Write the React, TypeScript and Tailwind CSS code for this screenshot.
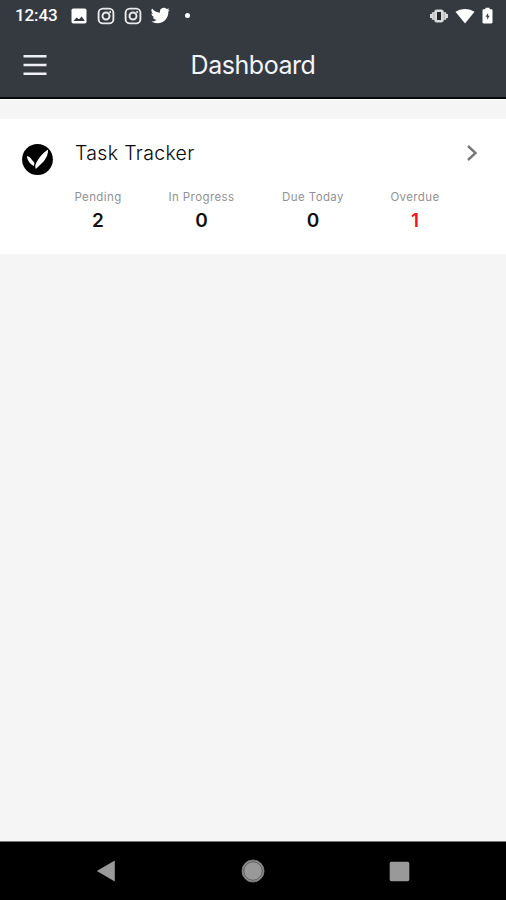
import type { ReactNode } from 'react';

function InstagramIcon() {
  return (
    <svg width="18" height="18" viewBox="0 0 18 18" fill="none" stroke="#e9eaeb">
      <rect x="1.6" y="1.6" width="14.8" height="14.8" rx="4.2" strokeWidth="1.9" />
      <circle cx="9" cy="9" r="3.5" strokeWidth="2" />
      <circle cx="13.1" cy="4.9" r="1" fill="white" stroke="none" />
    </svg>
  );
}

function StatusBar() {
  return (
    <div className="flex h-[31px] items-center pl-[15px] pr-[13px] text-white">
      <span className="w-[56px] text-[17px] font-medium leading-none tracking-[-0.1px] font-['Roboto',sans-serif]">12:43</span>
      <svg width="16" height="16" viewBox="0 0 16 16">
        <rect x="0.5" y="0.5" width="15" height="15" rx="1.8" fill="white" />
        <path d="M2.5 12.9 5.5 9.5 8 11.3 10.7 8.6 13.8 12.9Z" fill="#343941" />
      </svg>
      <div className="ml-[10px] flex gap-[9px]">
        <InstagramIcon />
        <InstagramIcon />
      </div>
      <svg className="ml-[9px]" width="19" height="19" viewBox="0 0 24 24" fill="white">
        <path d="M23.6 4.6a9.9 9.9 0 0 1-2.8.8 4.9 4.9 0 0 0 2.1-2.7 9.8 9.8 0 0 1-3.1 1.2 4.9 4.9 0 0 0-8.4 4.5A13.9 13.9 0 0 1 1.3 3.3a4.9 4.9 0 0 0 1.5 6.5 4.9 4.9 0 0 1-2.2-.6v.1a4.9 4.9 0 0 0 3.9 4.8 4.9 4.9 0 0 1-2.2.1 4.9 4.9 0 0 0 4.6 3.4A9.9 9.9 0 0 1 .4 19.6a13.9 13.9 0 0 0 7.5 2.2c9.1 0 14-7.5 14-14v-.6a10 10 0 0 0 1.7-2.6Z" />
      </svg>
      <span className="ml-[15px] size-[5px] rounded-full bg-white" />
      <svg className="ml-auto" width="20" height="16" viewBox="0 0 20 16">
        <path d="M1 6h1.8V4.2h2.4C5.2 2.4 6.2 1.6 7.8 1.6h4.4c1.6 0 2.6.8 2.6 2.6h2.4V6H19v4h-1.8v1.8h-2.4c0 1.8-1 2.6-2.6 2.6H7.8c-1.6 0-2.6-.8-2.6-2.6H2.8V10H1Z" fill="#d8d9da" />
        <rect x="8" y="4" width="4" height="8" fill="#24282e" />
        <path d="M4.9 5.2v5.6M15.1 5.2v5.6" stroke="#8b8e92" strokeWidth=".6" />
      </svg>
      <svg className="ml-[6px]" width="20" height="16" viewBox="0 0 20 16">
        <path d="M0.5 3.8C5.6-.1 14.4-.1 19.5 3.8L10 15.6Z" fill="white" />
      </svg>
      <svg className="ml-[7px]" width="11" height="17" viewBox="0 0 11 17">
        <path d="M3.4 0.8h4.2v1.5h1.7c.8 0 1.2.5 1.2 1.2v11.8c0 .7-.4 1.2-1.2 1.2H1.7c-.8 0-1.2-.5-1.2-1.2V3.5c0-.7.4-1.2 1.2-1.2h1.7Z" fill="white" />
        <path d="M6.1 6 3.6 9.8h1.6v3l2.4-4H6.1Z" fill="#343941" />
      </svg>
    </div>
  );
}

function Stat({ label, value, className }: { label: ReactNode; value: number; className: string }) {
  return (
    <div className={`flex flex-col items-center whitespace-nowrap ${className}`}>
      <span className="text-[11.5px] leading-[16px] tracking-[0.4px] text-[#929292]">{label}</span>
      <span className="mt-[5px] text-[19px] font-semibold leading-[22px]">{value}</span>
    </div>
  );
}

function TaskCard() {
  return (
    <section className="flex h-[135px] bg-white pl-[22px]">
      <svg className="mt-[25px] shrink-0" width="31" height="31" viewBox="0 0 31 31">
        <circle cx="15.5" cy="15.5" r="15.4" fill="black" />
        <path d="M4.8 12.4c1.6-.3 3.4.7 4.3 2.3.8 1.5 2.4 2.4 3.3 4.3l-.5 3C8.3 20.2 5.5 16.6 4.8 12.4Z" fill="white" />
        <path d="M26 5.6c.3 4.1-1.3 8-4 11.4-2.4 3-5.4 5.2-8.3 8-.7-2.2-.5-4.5.8-6.7C17.3 13.6 20.8 8.8 26 5.6Z" fill="white" />
      </svg>
      <div className="ml-[22px] flex-1">
        <div className="flex h-[70px] items-center justify-between pr-[28px] pb-[2px]">
          <h2 className="pt-[2px] text-[19.5px] font-light tracking-[0.33px] text-[#080808]">Task Tracker</h2>
          <svg width="12" height="18" viewBox="0 0 12 18" fill="none" stroke="#777" strokeWidth="2.4">
            <path d="m2 2 7.5 7L2 16" />
          </svg>
        </div>
        <div className="flex text-[#111]">
          <Stat label="Pending" value={2} className="w-[46px]" />
          <Stat label="In Progress" value={0} className="ml-[47px] w-[67px]" />
          <Stat label="Due Today" value={0} className="ml-[47px] w-[62px]" />
          <Stat label="Overdue" value={1} className="ml-[46px] w-[50px] [&>span:last-child]:text-[#f4141e]" />
        </div>
      </div>
    </section>
  );
}

export default function App() {
  return (
    <main className="flex h-[900px] w-[506px] flex-col overflow-hidden bg-[#f5f5f5] font-['Inter',sans-serif]">
      <header className="h-[99px] shrink-0 border-b-2 border-[#08090b] bg-[#353a41]">
        <StatusBar />
        <div className="grid h-[68px] grid-cols-[1fr_auto_1fr] items-center">
          <svg className="ml-[23px]" width="24" height="22" viewBox="0 0 24 22" stroke="#eef0f5" strokeWidth="2.4">
            <path d="M.5 2.3h23M.5 11h23M.5 19.7h23" />
          </svg>
          <h1 className="pt-[2px] text-[25px] tracking-[-0.45px] text-[#f3f5fb]">Dashboard</h1>
        </div>
      </header>
      <div className="h-[20px] shrink-0 border-t border-white" />
      <TaskCard />
      <nav className="mt-auto flex h-[59px] items-center border-t border-[#777] bg-black pl-[96px] pr-[96px] justify-between">
        <svg width="20" height="22" viewBox="0 0 20 22"><path d="M.8 11 18.8.5v21Z" fill="#999" /></svg>
        <svg width="24" height="24" viewBox="0 0 24 24">
          <circle cx="12" cy="12" r="11" fill="#999" stroke="#777" />
          <circle cx="12" cy="12" r="9.3" fill="none" stroke="#3b3b3b" strokeWidth=".7" />
        </svg>
        <svg width="21" height="21" viewBox="0 0 21 21"><rect x=".7" y=".7" width="19.6" height="19.6" rx="1.7" fill="#999" /></svg>
      </nav>
    </main>
  );
}
